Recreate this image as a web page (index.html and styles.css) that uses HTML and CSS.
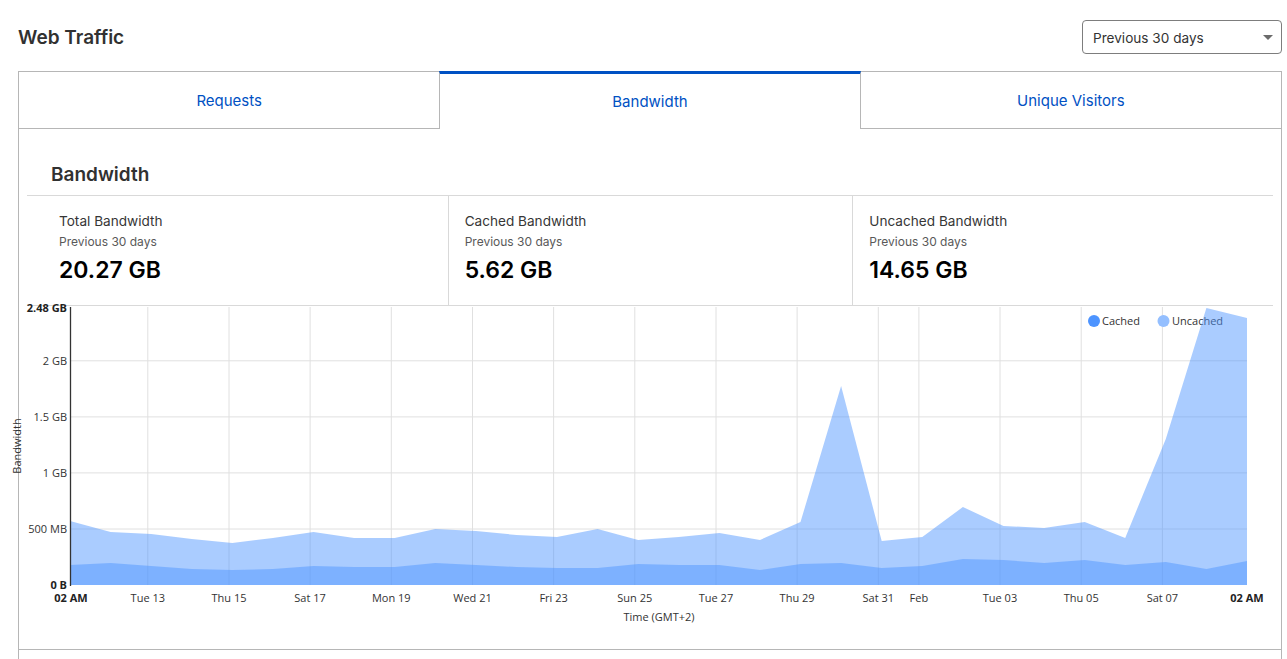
FILE: index.html
```html
<!DOCTYPE html>
<html lang="en">
<head>
<meta charset="utf-8">
<title>Web Traffic</title>
<link rel="stylesheet" href="styles.css">
</head>
<body>
<div class="page">
  <header class="page-head">
    <h1 class="page-title">Web Traffic</h1>
    <div class="select">
      <span class="select-text">Previous 30 days</span>
      <span class="caret"></span>
    </div>
  </header>

  <section class="card">
    <nav class="tabs">
      <div class="tab">Requests</div>
      <div class="tab active">Bandwidth</div>
      <div class="tab">Unique Visitors</div>
    </nav>

    <div class="panel">
      <h2 class="panel-title">Bandwidth</h2>

      <div class="stats">
        <div class="stat">
          <div class="stat-label">Total Bandwidth</div>
          <div class="stat-sub">Previous 30 days</div>
          <div class="stat-value">20.27 GB</div>
        </div>
        <div class="stat">
          <div class="stat-label">Cached Bandwidth</div>
          <div class="stat-sub">Previous 30 days</div>
          <div class="stat-value">5.62 GB</div>
        </div>
        <div class="stat">
          <div class="stat-label">Uncached Bandwidth</div>
          <div class="stat-sub">Previous 30 days</div>
          <div class="stat-value">14.65 GB</div>
        </div>
      </div>

      <svg class="chart" width="1246" height="343" viewBox="27 306 1246 343" xmlns="http://www.w3.org/2000/svg">
        <g class="grid">
          <line x1="70" y1="360.8" x2="1247" y2="360.8"/>
          <line x1="70" y1="416.9" x2="1247" y2="416.9"/>
          <line x1="70" y1="472.9" x2="1247" y2="472.9"/>
          <line x1="70" y1="529" x2="1247" y2="529"/>
          <line x1="147.8" y1="307" x2="147.8" y2="585"/>
          <line x1="229" y1="307" x2="229" y2="585"/>
          <line x1="310.1" y1="307" x2="310.1" y2="585"/>
          <line x1="391.3" y1="307" x2="391.3" y2="585"/>
          <line x1="472.5" y1="307" x2="472.5" y2="585"/>
          <line x1="553.6" y1="307" x2="553.6" y2="585"/>
          <line x1="634.8" y1="307" x2="634.8" y2="585"/>
          <line x1="716" y1="307" x2="716" y2="585"/>
          <line x1="797.1" y1="307" x2="797.1" y2="585"/>
          <line x1="878.3" y1="307" x2="878.3" y2="585"/>
          <line x1="918.9" y1="307" x2="918.9" y2="585"/>
          <line x1="1000" y1="307" x2="1000" y2="585"/>
          <line x1="1081.2" y1="307" x2="1081.2" y2="585"/>
          <line x1="1162.4" y1="307" x2="1162.4" y2="585"/>
        </g>

        <g class="legend">
          <circle class="dot-cached" cx="1094" cy="321" r="6"/>
          <text x="1102" y="325">Cached</text>
          <circle class="dot-uncached" cx="1163.5" cy="321" r="6"/>
          <text x="1172" y="325">Uncached</text>
        </g>

        <polygon class="area-uncached" points="70,521 110.6,532 151.2,534 191.8,539 232.3,543 272.9,538 313.5,532 354.1,538 394.7,538 435.3,529 475.9,531 516.4,535 557,537 597.6,529 638.2,540 678.8,537 719.4,533 760,540 800.5,522 841.1,386 881.7,541 922.3,537 962.9,507 1003.5,526 1044.1,528 1084.7,522 1125.2,538 1165.8,439 1206.4,308 1247,318 1247,585 70,585"/>
        <polygon class="area-cached" points="70,565 110.6,563 151.2,566 191.8,569 232.3,570 272.9,569 313.5,566 354.1,567 394.7,567 435.3,563 475.9,565 516.4,567 557,568 597.6,568 638.2,564 678.8,565 719.4,565 760,570 800.5,564 841.1,563 881.7,568 922.3,566 962.9,559 1003.5,560 1044.1,563 1084.7,560 1125.2,565 1165.8,562 1206.4,569 1247,561 1247,585 70,585"/>

        <line class="axis" x1="70.5" y1="307" x2="70.5" y2="586"/>

        <g class="ytick">
          <text class="strong" x="67" y="311.5">2.48 GB</text>
          <text x="67" y="365">2 GB</text>
          <text x="67" y="421">1.5 GB</text>
          <text x="67" y="477">1 GB</text>
          <text x="67" y="533">500 MB</text>
          <text class="strong" x="67" y="589">0 B</text>
        </g>

        <g class="xtick">
          <text class="strong" x="71" y="602">02 AM</text>
          <text x="147.8" y="602">Tue 13</text>
          <text x="229" y="602">Thu 15</text>
          <text x="310.1" y="602">Sat 17</text>
          <text x="391.3" y="602">Mon 19</text>
          <text x="472.5" y="602">Wed 21</text>
          <text x="553.6" y="602">Fri 23</text>
          <text x="634.8" y="602">Sun 25</text>
          <text x="716" y="602">Tue 27</text>
          <text x="797.1" y="602">Thu 29</text>
          <text x="878.3" y="602">Sat 31</text>
          <text x="918.9" y="602">Feb</text>
          <text x="1000" y="602">Tue 03</text>
          <text x="1081.2" y="602">Thu 05</text>
          <text x="1162.4" y="602">Sat 07</text>
          <text class="strong" x="1247" y="602">02 AM</text>
          <text x="659" y="621">Time (GMT+2)</text>
        </g>

        <text class="ylabel" x="0" y="0" transform="translate(21 446) rotate(-90)">Bandwidth</text>
      </svg>
    </div>

    <div class="next-section"></div>
  </section>
</div>
</body>
</html>
```

FILE: styles.css
```css
* {
  box-sizing: border-box;
}

html, body {
  margin: 0;
  padding: 0;
  background: #ffffff;
}

body {
  font-family: Inter, "Noto Sans", Arial, sans-serif;
  color: #333333;
  overflow: hidden;
}

.page {
  padding: 20px 5px 0 18px;
}

.page-head {
  display: flex;
  justify-content: space-between;
  align-items: center;
  height: 34px;
}

.page-title {
  margin: 0;
  padding-top: 2px;
  font-size: 19px;
  font-weight: 600;
  line-height: 24px;
  color: #313131;
}

.select {
  width: 200px;
  height: 34px;
  border: 1px solid #7d7d7d;
  border-radius: 4px;
  display: flex;
  align-items: center;
  justify-content: space-between;
  padding: 1px 8px 0 10px;
  font-size: 13.6px;
  color: #333333;
}

.caret {
  width: 0;
  height: 0;
  border-left: 5px solid transparent;
  border-right: 5px solid transparent;
  border-top: 5px solid #6b6b6b;
}

.card {
  margin-top: 17px;
  border-left: 1px solid #b6b6b6;
  border-right: 1px solid #b6b6b6;
}

.tabs {
  display: grid;
  grid-template-columns: 1fr 1fr 1fr;
  margin: 0 -1px;
}

.tab {
  height: 58px;
  border-top: 1px solid #b6b6b6;
  border-bottom: 1px solid #b6b6b6;
  display: flex;
  align-items: center;
  justify-content: center;
  font-size: 15px;
  color: #0051c3;
}

.tab:first-child {
  border-left: 1px solid #b6b6b6;
}

.tab:last-child {
  border-right: 1px solid #b6b6b6;
}

.tab.active {
  border-top: 3px solid #0051c3;
  border-bottom: none;
  border-left: 1px solid #b6b6b6;
  border-right: 1px solid #b6b6b6;
}

.panel {
  padding: 0 8px;
}

.panel-title {
  margin: 0;
  padding: 34px 0 8px 24px;
  font-size: 19px;
  font-weight: 600;
  line-height: 24px;
  color: #313131;
}

.stats {
  display: grid;
  grid-template-columns: 1fr 1fr 1fr;
  padding: 0 16px;
  border-top: 1px solid #d9d9d9;
  border-bottom: 1px solid #d9d9d9;
}

.stat {
  padding: 15px 16px 21px;
}

.stat + .stat {
  border-left: 1px solid #d9d9d9;
}

.stat-label {
  font-size: 13.6px;
  line-height: 20px;
  color: #363636;
}

.stat-sub {
  margin-top: 3px;
  font-size: 12px;
  line-height: 16px;
  color: #595959;
}

.stat-value {
  margin-top: 6px;
  font-size: 23px;
  line-height: 28px;
  font-weight: 600;
  color: #000000;
}

.chart {
  display: block;
  overflow: visible;
}

.chart text {
  font-family: "Open Sans", "Noto Sans", sans-serif;
  font-size: 11px;
  fill: #333333;
}

.chart .strong {
  font-weight: 700;
  fill: #222222;
}

.grid line {
  stroke: #e0e0e0;
  stroke-width: 1;
}

.axis {
  stroke: #333333;
  stroke-width: 1.3;
}

.ytick text {
  text-anchor: end;
}

.xtick text {
  text-anchor: middle;
}

.chart .ylabel {
  text-anchor: middle;
  font-size: 11px;
}

.dot-cached {
  fill: #4d94ff;
}

.dot-uncached {
  fill: #94bfff;
}

.area-uncached,
.area-cached {
  fill: #4d94ff;
  fill-opacity: 0.48;
}

.next-section {
  height: 40px;
  border-top: 1px solid #b6b6b6;
}
```
